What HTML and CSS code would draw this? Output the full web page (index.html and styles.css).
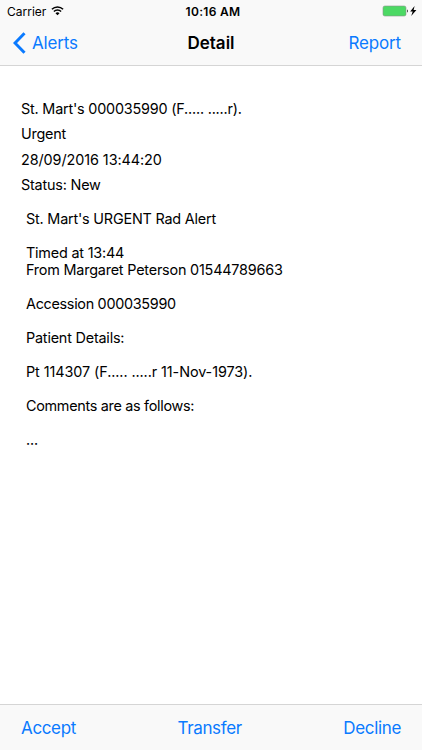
FILE: index.html
```html
<!DOCTYPE html>
<html lang="en">
<head>
    <meta charset="UTF-8">
    <meta name="viewport" content="width=device-width, initial-scale=1.0">
    <title>Detail</title>
    <link rel="stylesheet" href="styles.css">
</head>
<body>
    <header class="top">
        <div class="status-bar">
            <div class="carrier">
                <span>Carrier</span>
                <svg width="13" height="10" viewBox="0 0 13 10">
                    <path d="M0.9 3.3a8 8 0 0 1 11.2 0M2.9 5.5a5.1 5.1 0 0 1 7.2 0" fill="none" stroke="#000" stroke-width="1.5"/>
                    <path d="M4.5 7.2a2.8 2.8 0 0 1 4 0L6.5 9.3z"/>
                </svg>
            </div>
            <span class="time">10:16 AM</span>
            <div class="power">
                <svg width="36" height="12" viewBox="0 0 36 12">
                    <rect x="1" y="1" width="23" height="10" rx="1.8" fill="#4cd964" stroke="#8a958c" stroke-width="0.6"/>
                    <path d="M25 4.2q1.8 1.8 0 3.6z" fill="#000"/>
                    <path d="M32.6 1l-4.4 5.4h2.5L29.2 11l5.2-6H31.600z" fill="#000"/>
                </svg>
            </div>
        </div>
        <nav class="nav-bar">
            <a class="back">
                <svg width="13" height="22" viewBox="0 0 13 22">
                    <path d="M11.5 1.2L2 11l9.500 9.800" fill="none" stroke="#0a7aff" stroke-width="3"/>
                </svg>
                <span>Alerts</span>
            </a>
            <h1>Detail</h1>
            <a class="report">Report</a>
        </nav>
    </header>

    <main class="content">
        <div class="summary">
            <p>St. Mart's 000035990 (F..... .....r).</p>
            <p>Urgent</p>
            <p class="wide">28/09/2016 13:44:20</p>
            <p>Status: New</p>
        </div>
        <div class="message">
            <p>St. Mart's URGENT Rad Alert</p>
            <p>Timed at 13:44<br>From Margaret Peterson 01544789663</p>
            <p class="tight">Accession 000035990</p>
            <p>Patient Details:</p>
            <p class="wide">Pt 114307 (F..... .....r 11-Nov-1973).</p>
            <p class="tight">Comments are as follows:</p>
            <p>...</p>
        </div>
    </main>

    <footer class="toolbar">
        <a>Accept</a>
        <a>Transfer</a>
        <a>Decline</a>
    </footer>
</body>
</html>
```
FILE: styles.css
```css
body {
    font-family: Inter, "Liberation Sans", sans-serif;
    background: #fff;
    color: #000;
    margin: 0;
    height: 750px;
    display: flex;
    flex-direction: column;
    overflow: hidden;
}

p, h1 {
    margin: 0;
}

a {
    color: #0a7aff;
    font-size: 17px;
}

.top {
    box-sizing: border-box;
    height: 66px;
    background: #f9f9f9;
    border-bottom: 1px solid #d5d5d5;
}

.status-bar {
    display: grid;
    grid-template-columns: 1fr auto 1fr;
    align-items: center;
    height: 22px;
    padding: 0 4px;
    font-size: 12px;
}

.carrier {
    display: flex;
    align-items: center;
    gap: 5px;
    padding-left: 3px;
}

.time {
    font-weight: 600;
    letter-spacing: 0.3px;
    padding-left: 4px;
}

.power {
    display: flex;
    justify-content: flex-end;
}

.nav-bar {
    display: grid;
    grid-template-columns: 1fr auto 1fr;
    align-items: center;
    height: 42px;
    padding: 0 13px;
}

.back {
    display: flex;
    align-items: center;
    gap: 6px;
    letter-spacing: -0.15px;
}

.nav-bar h1 {
    font-size: 17px;
    font-weight: 600;
}

.report {
    text-align: right;
    padding-right: 8px;
    letter-spacing: -0.15px;
}

.content {
    flex: 1;
    padding: 30px 21px 0;
    font-size: 14.4px;
    letter-spacing: -0.2px;
}

.content .wide {
    letter-spacing: -0.08px;
}

.content .tight {
    letter-spacing: -0.3px;
}

.summary p {
    line-height: 25.4px;
}

.message {
    padding: 12px 5px 0;
    line-height: 17px;
}

.message p {
    margin-bottom: 17px;
}

.toolbar {
    box-sizing: border-box;
    height: 46px;
    display: flex;
    justify-content: space-between;
    align-items: center;
    padding: 0 21px;
    background: #f9f9f9;
    border-top: 1px solid #d5d5d5;
    letter-spacing: -0.35px;
}
```
